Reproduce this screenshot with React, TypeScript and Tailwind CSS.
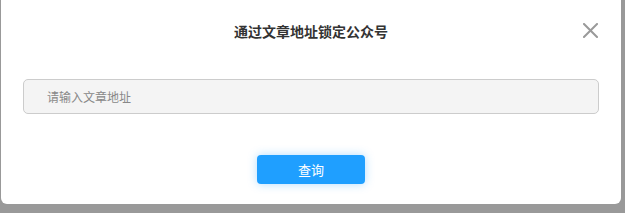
export default function App() {
  return (
    <div
      className="h-[213px] w-[625px] bg-[#999999] pl-[1px] flex flex-col"
      style={{ fontFamily: '"Noto Sans CJK SC", "Noto Sans", sans-serif' }}
    >
      <div className="relative flex h-[204px] w-[620px] flex-col rounded-b-[6px] bg-white">
        {/* header */}
        <div className="pt-[21px] text-center text-[14px] leading-[20px] font-bold text-[#333333]">
          通过文章地址锁定公众号
        </div>
        <button className="absolute right-[23px] top-[23px] h-[15px] w-[15px]" aria-label="close">
          <svg viewBox="0 0 15 15" className="h-[15px] w-[15px]">
            <path d="M1 1 L14 14 M14 1 L1 14" stroke="#9a9a9a" strokeWidth="2" strokeLinecap="square" />
          </svg>
        </button>

        {/* input */}
        <div className="mx-[22px] mt-[38px]">
          <input
            placeholder="请输入文章地址"
            className="h-[35px] w-full rounded-[5px] border border-[#cccccc] bg-[#f4f4f4] px-[23px] text-[12px] text-[#333] outline-none placeholder:text-[#888888]"
          />
        </div>

        {/* action */}
        <div className="mt-[41px] flex justify-center">
          <button className="h-[29px] w-[108px] rounded-[4px] bg-[#1f9fff] text-[13px] text-white shadow-[0_0_10px_rgba(31,159,255,0.35)]">
            查询
          </button>
        </div>
      </div>
    </div>
  );
}
